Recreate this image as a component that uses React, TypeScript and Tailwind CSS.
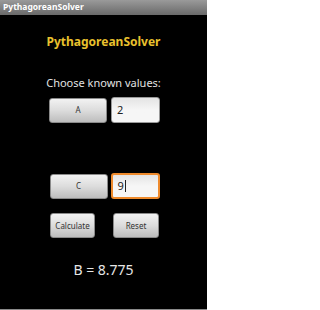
const FONT = "font-['Noto_Sans','Open_Sans',sans-serif]";

function GrayButton({ label, className }: { label: string; className: string }) {
  return (
    <div
      className={`flex items-center justify-center rounded-[3px] border border-[#8a8a8a] bg-gradient-to-b from-[#f2f2f2] via-[#dcdcdc] to-[#bdbdbd] text-[8px] text-[#333] ${className}`}
    >
      {label}
    </div>
  );
}

function Field({ value, focused }: { value: string; focused?: boolean }) {
  return (
    <div
      className={`flex items-center rounded-[3px] bg-gradient-to-b from-[#e4e4e4] via-[#f6f6f6] to-[#f6f6f6] pl-[5px] text-[11px] text-[#222] ${
        focused ? "border-2 border-[#ee8a2c]" : "border border-[#9a9a9a]"
      } h-[26px] w-[49px]`}
    >
      <span>{value}</span>
      {focused && <span className="ml-[1px] h-[12px] w-[1px] bg-[#222]" />}
    </div>
  );
}

export default function App() {
  return (
    <div className={`flex h-[310px] w-[207px] flex-col bg-black ${FONT}`}>
      <div className="flex h-[15px] items-center bg-gradient-to-b from-[#9a9a9a] to-[#6a6a6a] pl-[3px] text-[8.5px] font-bold text-white">
        PythagoreanSolver
      </div>
      <div className="flex flex-1 flex-col items-center">
        <div className="mt-[19px] text-[12px] font-bold leading-[16px] text-[#e9c12e]">
          PythagoreanSolver
        </div>
        <div className="mt-[26px] text-[11px] leading-[14px] text-[#e2e2e2]">
          Choose known values:
        </div>
        <div className="mt-[7px] flex items-center gap-[4px] pl-[2px]">
          <GrayButton label="A" className="h-[25px] w-[58px]" />
          <Field value="2" />
        </div>
        <div className="mt-[50px] flex items-center gap-[3px] pl-[2px]">
          <GrayButton label="C" className="h-[25px] w-[58px]" />
          <Field value="9" focused />
        </div>
        <div className="mt-[14px] flex gap-[18px] pl-[2px]">
          <GrayButton label="Calculate" className="h-[25px] w-[45px]" />
          <GrayButton label="Reset" className="h-[25px] w-[46px]" />
        </div>
        <div className="mt-[24px] text-[14px] leading-[16px] text-[#e6e6e6]">
          B = 8.775
        </div>
      </div>
      <div className="h-[1px] bg-[#8a8a8a]" />
    </div>
  );
}
